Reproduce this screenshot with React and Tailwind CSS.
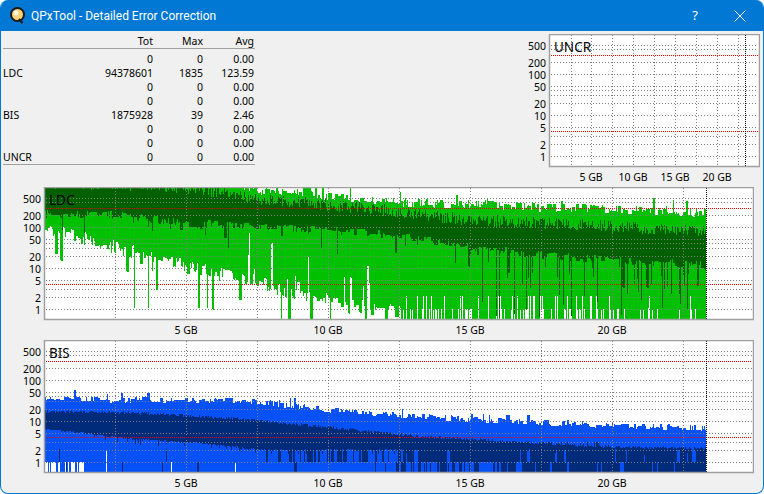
import React from 'react';

const rows = [
  ['', '0', '0', '0.00'],
  ['LDC', '94378601', '1835', '123.59'],
  ['', '0', '0', '0.00'],
  ['', '0', '0', '0.00'],
  ['BIS', '1875928', '39', '2.46'],
  ['', '0', '0', '0.00'],
  ['', '0', '0', '0.00'],
  ['UNCR', '0', '0', '0.00'],
];

const gridValues = [1, 2, 3, 5, 10, 20, 30, 40, 50, 100, 200, 400, 500];
const redRows = [21, 97];
const labelValues = [500, 200, 100, 50, 20, 10, 5, 2, 1];

const rng = (seed) => () => {
  seed = (seed + 0x6d2b79f5) | 0;
  let t = Math.imul(seed ^ (seed >>> 15), 1 | seed);
  t = (t + Math.imul(t ^ (t >>> 7), 61 | t)) ^ t;
  return ((t ^ (t >>> 14)) >>> 0) / 4294967296;
};

const interp = (pts, x) => {
  if (x <= pts[0][0]) return pts[0][1];
  for (let i = 1; i < pts.length; i++) {
    if (x <= pts[i][0]) {
      const [a, b] = [pts[i - 1], pts[i]];
      return a[1] + ((b[1] - a[1]) * (x - a[0])) / (b[0] - a[0]);
    }
  }
  return pts[pts.length - 1][1];
};

const seg = (x, a, b) => (b > a ? `M${x + 0.5} ${Math.round(a)}V${Math.round(b)}` : '');

function ldcData() {
  const r = rng(71);
  const top = [[45, 180], [230, 184], [260, 191], [330, 197], [400, 203], [470, 205], [541, 208], [612, 210], [706, 214]];
  const dTop = [[45, 180], [150, 182], [230, 190], [260, 197], [330, 202], [400, 209], [470, 217], [541, 220], [620, 224], [706, 228]];
  const dBot = [[45, 213], [115, 214], [186, 222], [257, 226], [328, 229], [400, 235], [470, 246], [541, 254], [612, 259], [706, 264]];
  const low = [[45, 229], [100, 243], [150, 257], [200, 270], [250, 280], [300, 295], [350, 305], [400, 312], [706, 319]];
  let green = '';
  let dark = '';
  let tn = 0;
  let ln = 0;
  let bn = 0;
  for (let x = 45; x < 706; x++) {
    // values hold for a pixel or two, as the bins of the scan do
    if (r() < 0.6) tn = r() * 9 - 5 - (r() < 0.12 ? r() * 14 : 0);
    if (r() < 0.6) {
      ln = (r() - 0.5) * 14;
      if (r() < 0.12) ln += r() * 40;
      if (x > 240 && x < 460 && r() < 0.2) ln -= r() * 50;
    }
    if (r() < 0.6) bn = r() * 8 - 3 + (r() < 0.12 ? r() * 24 : 0);
    let l = interp(low, x) + ln;
    if (x > 400) {
      l = 319;
      const gaps = x > 620 ? 0.2 : 0.4;
      if (r() < gaps) l = 319 - (r() < 0.3 ? 23 : 10);
    }
    if (r() < 0.01) l = 308;
    green += seg(x, Math.max(188, interp(top, x) + tn), Math.min(319, l));
    const a = Math.max(188, interp(dTop, x) + r() * 12 - 3);
    let b = interp(dBot, x) + bn;
    if (x > 480 && r() < 0.05 + (x - 480) / 1500) b = 270 + r() * 49;
    dark += seg(x, a, b);
  }
  return [
    { color: '#00c000', d: green },
    { color: '#006000', d: dark },
  ];
}

function bisData() {
  const r = rng(29);
  const top = [[45, 399], [250, 401], [330, 410], [400, 415], [500, 421], [600, 425], [706, 428]];
  const dTop = [[45, 412], [130, 413], [250, 420], [350, 430], [420, 437], [510, 442], [600, 447], [706, 449]];
  const dBot = [[45, 428], [90, 433], [130, 438], [200, 442], [250, 448], [270, 449], [706, 449]];
  const mid = [[270, 0.02], [275, 0.5], [400, 0.55], [420, 0.95], [600, 0.92], [706, 0.7]];
  const lowP = [[390, 0.02], [395, 0.3], [500, 0.5], [510, 0.9], [706, 0.92]];
  let blue = '';
  let dark = '';
  let tn = 0;
  let midOn = false;
  let lowOn = false;
  for (let x = 45; x < 706; x++) {
    if (r() < 0.5) tn = r() * 6 - 3 - (r() < 0.05 ? r() * 8 : 0);
    if (r() < 0.6) midOn = r() < interp(mid, x);
    if (r() < 0.6) lowOn = r() < interp(lowP, x);
    let end = 472;
    if (x < 85 && r() < 0.5) end = 462;
    if (x > 85 && r() < 0.01) end = 462;
    if (x < 125 && r() < 0.02) end = 450;
    blue += seg(x, interp(top, x) + tn, end);
    const a = interp(dTop, x) + r() * 3 - 2;
    let b = interp(dBot, x) + r() * 2;
    if (x > 90 && r() < 0.12) b += 4;
    dark += seg(x, a, b);
    if (midOn) dark += seg(x, 449, 462);
    if (lowOn) dark += seg(x, 462, 472);
    if (x > 410 && x < 600 && r() < 0.25) dark += seg(x, 442, 449);
  }
  return [
    { color: '#0652f8', d: blue },
    { color: '#002a7a', d: dark },
  ];
}

const ldcSeries = ldcData();
const bisSeries = bisData();

function Chart({ title, box, plot, vLines, mark, xLabels, labelX, series = [], className }) {
  const [left, top, w, h] = box;
  const [x0, y0, x1, y1] = plot;
  const yOf = (v) => Math.round(y0 + 122 - 41 * Math.log10(v)) + 0.5;

  return (
    <svg width={w} height={h} viewBox={`${left} ${top} ${w} ${h}`} className={className} fontSize="10.5">
      <rect x={x0} y={y0} width={x1 - x0} height={y1 - y0} fill="#ffffff" />
      {series.map((s) => (
        <path key={s.color} d={s.d} stroke={s.color} strokeWidth="1" fill="none" />
      ))}
      <g strokeWidth="1">
        {gridValues.map((v) => (
          <line key={v} x1={x0 + 2} x2={x1 - 2} y1={yOf(v)} y2={yOf(v)} stroke="#808080" strokeDasharray="1 2" />
        ))}
        {vLines.map((x) => (
          <line key={x} x1={x + 0.5} x2={x + 0.5} y1={y0 + 1} y2={y1 - 1} stroke="#808080" strokeDasharray="1 2" />
        ))}
        {redRows.map((row) => (
          <line key={row} x1={x0 + 2} x2={x1 - 2} y1={y0 + row + 0.5} y2={y0 + row + 0.5} stroke="#f00000" strokeDasharray="1 1" />
        ))}
        <line x1={mark + 0.5} x2={mark + 0.5} y1={y0 + 1} y2={y1 - 1} stroke="#000000" strokeDasharray="1 1" />
      </g>
      <rect x={x0 + 0.5} y={y0 + 0.5} width={x1 - x0 - 1} height={y1 - y0 - 1} fill="none" stroke="#a0a0a0" strokeWidth="1.5" />
      <text x={x0 + 5} y={y0 + 18} fontSize="13.5" fill="#000000">{title}</text>
      {labelValues.map((v) => (
        <text key={v} x={labelX} y={yOf(v) + 4} textAnchor="end" fill="#000000">{v}</text>
      ))}
      {xLabels.map(([x, t]) => (
        <text key={t} x={x} y={y1 + 14} textAnchor="middle" fill="#000000">{t}</text>
      ))}
    </svg>
  );
}

const wideLines = [115, 186, 257, 328, 399, 470, 541, 612, 683];
const wideLabels = [[186, '5 GB'], [328, '10 GB'], [470, '15 GB'], [612, '20 GB']];

export default function App() {
  return (
    <div className="w-[764px] h-[494px] bg-white font-['Noto_Sans',sans-serif]">
      <div className="w-full h-full flex flex-col rounded-lg overflow-hidden border border-[#0078d4] border-t-0 bg-[#f0f0f0]">
        {/* Title bar */}
        <div className="h-[31px] shrink-0 bg-[#0078d4] flex items-center pl-[9px] text-white">
          <svg width="15" height="17" viewBox="0 0 15 17" className="mr-[6px]">
            <circle cx="7.5" cy="7.5" r="6.5" fill="#f6d27a" stroke="#1a1a1a" strokeWidth="2" />
            <circle cx="6" cy="6" r="2.5" fill="#fff6dc" />
            <path d="M9 12l3.5 4" stroke="#1a1a1a" strokeWidth="2" />
          </svg>
          <span className="text-[12px] font-['Roboto',sans-serif]">QPxTool - Detailed Error Correction</span>
          <span className="ml-auto text-[13px] mr-[35px]">?</span>
          <svg width="14" height="14" viewBox="0 0 14 14" className="mr-[16px]">
            <path d="M1.5 1.5l11 11M12.5 1.5l-11 11" stroke="#ffffff" strokeWidth="1" fill="none" />
          </svg>
        </div>

        {/* Summary table and UNCR */}
        <div className="flex justify-between pt-[3px] h-[153px] shrink-0">
          <div className="w-[252px] ml-[2px] text-[10.5px] text-black leading-[14px]">
            <div className="grid grid-cols-[50px_100px_50px_51px] h-[15px] border-b border-[#a0a0a0]">
              <span />
              <span className="text-right">Tot</span>
              <span className="text-right">Max</span>
              <span className="text-right">Avg</span>
            </div>
            <div className="pt-[3px] border-b border-[#a0a0a0]">
              {rows.map((row, i) => (
                <div key={i} className="grid grid-cols-[50px_100px_50px_51px] h-[14px]">
                  <span>{row[0]}</span>
                  <span className="text-right">{row[1]}</span>
                  <span className="text-right">{row[2]}</span>
                  <span className="text-right">{row[3]}</span>
                </div>
              ))}
            </div>
          </div>
          <Chart
            title="UNCR"
            box={[522, 34, 238, 150]}
            plot={[549, 34, 760, 167]}
            vLines={[571, 591, 612, 633, 654, 675, 696, 717, 738]}
            mark={745}
            xLabels={[[591, '5 GB'], [633, '10 GB'], [675, '15 GB'], [717, '20 GB']]}
            labelX={546}
            className="mr-[3px]"
          />
        </div>

        {/* LDC */}
        <Chart
          title="LDC"
          box={[1, 187, 753, 150]}
          plot={[44, 187, 754, 320]}
          vLines={wideLines}
          mark={706}
          xLabels={wideLabels}
          labelX={41}
          series={ldcSeries}
          className="shrink-0 mt-[3px]"
        />

        {/* BIS */}
        <Chart
          title="BIS"
          box={[1, 340, 753, 150]}
          plot={[44, 340, 754, 473]}
          vLines={wideLines}
          mark={706}
          xLabels={wideLabels}
          labelX={41}
          series={bisSeries}
          className="shrink-0 mt-[3px]"
        />
      </div>
    </div>
  );
}
